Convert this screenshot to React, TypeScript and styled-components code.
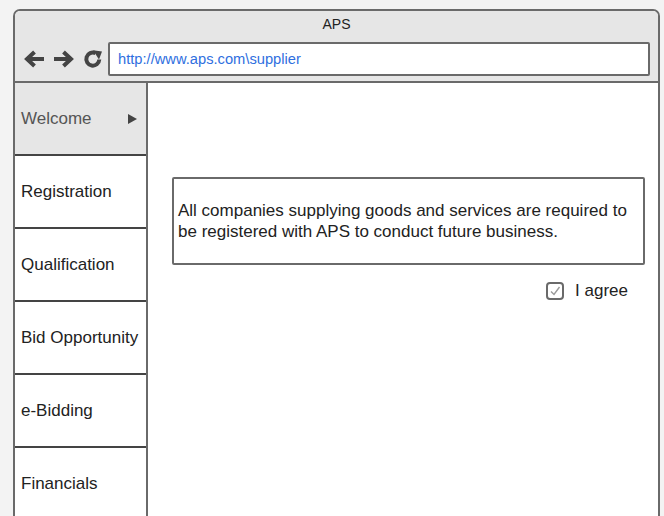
import React from "react";
import styled, { createGlobalStyle } from "styled-components";

const Global = createGlobalStyle`
  html, body {
    margin: 0;
    padding: 0;
    background: #f3f3f3;
    font-family: "Liberation Sans", Arial, sans-serif;
  }
  body {
    overflow: hidden;
  }
`;

const Frame = styled.div`
  margin: 9px 0 0 13px;
  width: 647px;
  height: 530px;
  box-sizing: border-box;
  border: 2px solid #6a6a6a;
  border-bottom: none;
  border-radius: 7px 7px 0 0;
  background: #fff;
  display: flex;
  flex-direction: column;
  overflow: hidden;
`;

const Header = styled.div`
  background: #e6e6e6;
  border-bottom: 2px solid #6a6a6a;
  display: flex;
  flex-direction: column;
`;

const Title = styled.div`
  height: 27px;
  line-height: 27px;
  text-align: center;
  font-size: 14px;
  color: #222;
`;

const NavRow = styled.div`
  display: flex;
  align-items: center;
  padding: 4px 8px 5px 8px;
`;

const NavIcons = styled.div`
  display: flex;
  align-items: center;
  gap: 8px;
  width: 85px;
  height: 34px;
`;

const Address = styled.div`
  flex: 1;
  height: 34px;
  box-sizing: border-box;
  border: 2px solid #6a6a6a;
  border-radius: 2px;
  background: #fff;
  display: flex;
  align-items: center;
  padding-left: 8px;
  font-size: 14.7px;
  color: #2f6fe0;
`;

const Body = styled.div`
  flex: 1;
  display: flex;
`;

const Sidebar = styled.div`
  width: 131px;
  border-right: 2px solid #6a6a6a;
  display: flex;
  flex-direction: column;
`;

const NavItem = styled.div<{ $active?: boolean }>`
  height: 71px;
  flex-shrink: 0;
  border-bottom: 2px solid #444;
  background: ${(p) => (p.$active ? "#e6e6e6" : "#fff")};
  color: ${(p) => (p.$active ? "#555" : "#222")};
  display: flex;
  align-items: center;
  justify-content: space-between;
  padding: 0 9px 0 6px;
  font-size: 17px;
  white-space: nowrap;
`;

const Caret = styled.span`
  width: 0;
  height: 0;
  border-top: 5px solid transparent;
  border-bottom: 5px solid transparent;
  border-left: 9px solid #444;
`;

const Main = styled.div`
  flex: 1;
  padding: 94px 13px 0 24px;
  display: flex;
  flex-direction: column;
`;

const Notice = styled.div`
  height: 88px;
  box-sizing: border-box;
  border: 2px solid #6a6a6a;
  border-radius: 2px;
  display: flex;
  align-items: center;
  padding: 0 4px;
  font-size: 17px;
  line-height: 21px;
  color: #222;
`;

const AgreeRow = styled.label`
  align-self: flex-end;
  margin: 16px 17px 0 0;
  display: flex;
  align-items: center;
  gap: 11px;
  font-size: 17px;
  color: #222;
`;

const Check = styled.span`
  width: 18px;
  height: 18px;
  box-sizing: border-box;
  border: 2px solid #6a6a6a;
  border-radius: 4px;
  display: flex;
  align-items: center;
  justify-content: center;
`;

const BackIcon = () => (
  <svg width="22" height="20" viewBox="0 0 22 20">
    <path d="M21 10 H5 M11.5 3 L4 10 L11.5 17" fill="none" stroke="#444" strokeWidth="4" strokeLinejoin="miter" />
  </svg>
);

const ForwardIcon = () => (
  <svg width="22" height="20" viewBox="0 0 22 20">
    <path d="M1 10 H17 M10.5 3 L18 10 L10.5 17" fill="none" stroke="#444" strokeWidth="4" strokeLinejoin="miter" />
  </svg>
);

const ReloadIcon = () => (
  <svg width="20" height="20" viewBox="0 0 20 20">
    <path d="M16.3 10.5 A6.5 6.5 0 1 1 12.5 4.2" fill="none" stroke="#444" strokeWidth="4" />
    <path d="M10 1.2 L19 2.5 L16 10.5 Z" fill="#444" />
  </svg>
);

const Tick = () => (
  <svg width="12" height="12" viewBox="0 0 12 12">
    <path d="M2 6.5 L5 9.5 L10.5 2" fill="none" stroke="#9a9a9a" strokeWidth="1.4" />
  </svg>
);

const menu = ["Registration", "Qualification", "Bid Opportunity", "e-Bidding", "Financials"];

export default function App() {
  return (
    <>
      <Global />
      <Frame>
        <Header>
          <Title>APS</Title>
          <NavRow>
            <NavIcons>
              <BackIcon />
              <ForwardIcon />
              <ReloadIcon />
            </NavIcons>
            <Address>http://www.aps.com\supplier</Address>
          </NavRow>
        </Header>
        <Body>
          <Sidebar>
            <NavItem $active>
              Welcome
              <Caret />
            </NavItem>
            {menu.map((m) => (
              <NavItem key={m}>{m}</NavItem>
            ))}
          </Sidebar>
          <Main>
            <Notice>
              All companies supplying goods and services are required to be registered with APS to conduct future business.
            </Notice>
            <AgreeRow>
              <Check>
                <Tick />
              </Check>
              I agree
            </AgreeRow>
          </Main>
        </Body>
      </Frame>
    </>
  );
}
